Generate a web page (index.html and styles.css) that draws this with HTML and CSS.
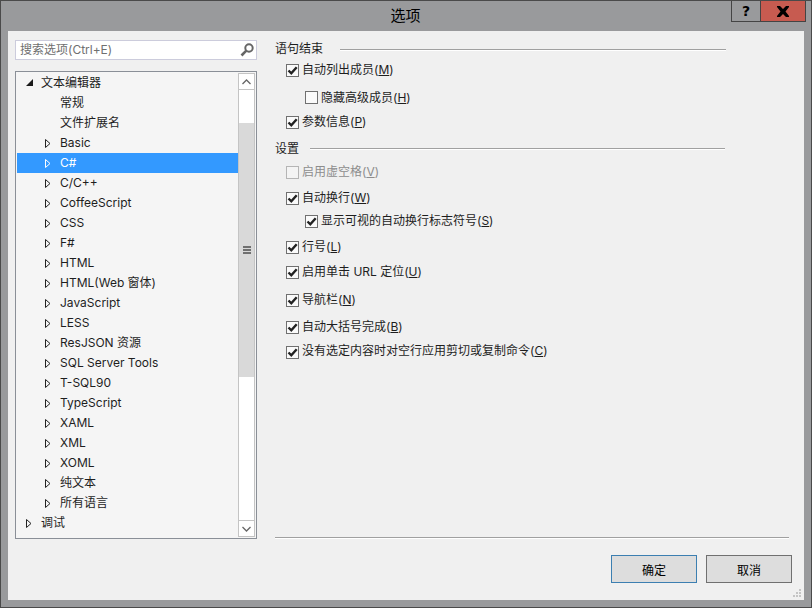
FILE: index.html
```html
<!DOCTYPE html>
<html lang="zh-CN">
<head>
<meta charset="utf-8">
<title>选项</title>
<link rel="stylesheet" href="styles.css">
</head>
<body>
<div class="window">
  <header class="titlebar">
    <div class="title">选项</div>
    <div class="controls">
      <div class="ctl help">?</div>
      <div class="ctl close"><svg width="14" height="11" viewBox="0 0 14 11"><path d="M1 0h3l3 3 3-3h3v1L9.500 5.500 13 10v1h-3L7 8l-3 3H1v-1l3.500-4.500L1 1z" fill="#000"/></svg></div>
    </div>
  </header>
  <main class="client">
    <div class="panes">
      <aside class="left">
        <div class="search"><span class="placeholder">搜索选项(Ctrl+E)</span>
          <svg class="mag" width="14" height="14" viewBox="0 0 14 14"><circle cx="9" cy="5" r="3.700" fill="none" stroke="#666" stroke-width="2"/><path d="M6.300 7.700 1.500 12.500" stroke="#666" stroke-width="2.600"/></svg>
        </div>
        <div class="tree">
          <div class="items">
            <div class="row l0"><svg class="arrow" width="7" height="7" viewBox="0 0 7 7"><path d="M7 0v7H0z" fill="#1a1a1a"/></svg><span>文本编辑器</span></div>
            <div class="row l1"><span>常规</span></div>
            <div class="row l1"><span>文件扩展名</span></div>
            <div class="row l1"><svg class="arrow" width="6" height="9" viewBox="0 0 6 9"><path d="M.5.500 5 4.500.5 8.500z" fill="none" stroke="#222"/></svg><span>Basic</span></div>
            <div class="row l1 selected"><svg class="arrow" width="6" height="9" viewBox="0 0 6 9"><path d="M.5.500 5 4.500.5 8.500z" fill="none" stroke="#fff"/></svg><span>C#</span></div>
            <div class="row l1"><svg class="arrow" width="6" height="9" viewBox="0 0 6 9"><path d="M.5.500 5 4.500.5 8.500z" fill="none" stroke="#222"/></svg><span>C/C++</span></div>
            <div class="row l1"><svg class="arrow" width="6" height="9" viewBox="0 0 6 9"><path d="M.5.500 5 4.500.5 8.500z" fill="none" stroke="#222"/></svg><span>CoffeeScript</span></div>
            <div class="row l1"><svg class="arrow" width="6" height="9" viewBox="0 0 6 9"><path d="M.5.500 5 4.500.5 8.500z" fill="none" stroke="#222"/></svg><span>CSS</span></div>
            <div class="row l1"><svg class="arrow" width="6" height="9" viewBox="0 0 6 9"><path d="M.5.500 5 4.500.5 8.500z" fill="none" stroke="#222"/></svg><span>F#</span></div>
            <div class="row l1"><svg class="arrow" width="6" height="9" viewBox="0 0 6 9"><path d="M.5.500 5 4.500.5 8.500z" fill="none" stroke="#222"/></svg><span>HTML</span></div>
            <div class="row l1"><svg class="arrow" width="6" height="9" viewBox="0 0 6 9"><path d="M.5.500 5 4.500.5 8.500z" fill="none" stroke="#222"/></svg><span>HTML(Web 窗体)</span></div>
            <div class="row l1"><svg class="arrow" width="6" height="9" viewBox="0 0 6 9"><path d="M.5.500 5 4.500.5 8.500z" fill="none" stroke="#222"/></svg><span>JavaScript</span></div>
            <div class="row l1"><svg class="arrow" width="6" height="9" viewBox="0 0 6 9"><path d="M.5.500 5 4.500.5 8.500z" fill="none" stroke="#222"/></svg><span>LESS</span></div>
            <div class="row l1"><svg class="arrow" width="6" height="9" viewBox="0 0 6 9"><path d="M.5.500 5 4.500.5 8.500z" fill="none" stroke="#222"/></svg><span>ResJSON 资源</span></div>
            <div class="row l1"><svg class="arrow" width="6" height="9" viewBox="0 0 6 9"><path d="M.5.500 5 4.500.5 8.500z" fill="none" stroke="#222"/></svg><span>SQL Server Tools</span></div>
            <div class="row l1"><svg class="arrow" width="6" height="9" viewBox="0 0 6 9"><path d="M.5.500 5 4.500.5 8.500z" fill="none" stroke="#222"/></svg><span>T-SQL90</span></div>
            <div class="row l1"><svg class="arrow" width="6" height="9" viewBox="0 0 6 9"><path d="M.5.500 5 4.500.5 8.500z" fill="none" stroke="#222"/></svg><span>TypeScript</span></div>
            <div class="row l1"><svg class="arrow" width="6" height="9" viewBox="0 0 6 9"><path d="M.5.500 5 4.500.5 8.500z" fill="none" stroke="#222"/></svg><span>XAML</span></div>
            <div class="row l1"><svg class="arrow" width="6" height="9" viewBox="0 0 6 9"><path d="M.5.500 5 4.500.5 8.500z" fill="none" stroke="#222"/></svg><span>XML</span></div>
            <div class="row l1"><svg class="arrow" width="6" height="9" viewBox="0 0 6 9"><path d="M.5.500 5 4.500.5 8.500z" fill="none" stroke="#222"/></svg><span>XOML</span></div>
            <div class="row l1"><svg class="arrow" width="6" height="9" viewBox="0 0 6 9"><path d="M.5.500 5 4.500.5 8.500z" fill="none" stroke="#222"/></svg><span>纯文本</span></div>
            <div class="row l1"><svg class="arrow" width="6" height="9" viewBox="0 0 6 9"><path d="M.5.500 5 4.500.5 8.500z" fill="none" stroke="#222"/></svg><span>所有语言</span></div>
            <div class="row l0"><svg class="arrow" width="6" height="9" viewBox="0 0 6 9"><path d="M.5.500 5 4.500.5 8.500z" fill="none" stroke="#222"/></svg><span>调试</span></div>
          </div>
          <div class="scrollbar">
            <div class="sbtn"><svg width="9" height="6" viewBox="0 0 9 6"><path d="M.5 5 4.500 1 8.500 5" fill="none" stroke="#666" stroke-width="1.300"/></svg></div>
            <div class="strack top"></div>
            <div class="thumb"><div class="grip"><i></i><i></i><i></i></div></div>
            <div class="strack bottom"></div>
            <div class="sbtn"><svg width="9" height="6" viewBox="0 0 9 6"><path d="M.5 1 4.500 5 8.500 1" fill="none" stroke="#666" stroke-width="1.300"/></svg></div>
          </div>
        </div>
      </aside>
      <section class="right">
        <div class="group g1"><span>语句结束</span><i></i></div>
        <label class="check c1"><b class="box"><svg class="tick" width="11" height="11" viewBox="0 0 11 11"><path d="M1.500 5.500 4.300 8.300 9.700 2.200" fill="none" stroke="#222" stroke-width="2.400"/></svg></b><span>自动列出成员(<u>M</u>)</span></label>
        <label class="check nested c2"><b class="box"></b><span>隐藏高级成员(<u>H</u>)</span></label>
        <label class="check c3"><b class="box"><svg class="tick" width="11" height="11" viewBox="0 0 11 11"><path d="M1.500 5.500 4.300 8.300 9.700 2.200" fill="none" stroke="#222" stroke-width="2.400"/></svg></b><span>参数信息(<u>P</u>)</span></label>
        <div class="group g2"><span>设置</span><i></i></div>
        <label class="check disabled c4"><b class="box"></b><span>启用虚空格(<u>V</u>)</span></label>
        <label class="check c5"><b class="box"><svg class="tick" width="11" height="11" viewBox="0 0 11 11"><path d="M1.500 5.500 4.300 8.300 9.700 2.200" fill="none" stroke="#222" stroke-width="2.400"/></svg></b><span>自动换行(<u>W</u>)</span></label>
        <label class="check nested c6"><b class="box"><svg class="tick" width="11" height="11" viewBox="0 0 11 11"><path d="M1.500 5.500 4.300 8.300 9.700 2.200" fill="none" stroke="#222" stroke-width="2.400"/></svg></b><span>显示可视的自动换行标志符号(<u>S</u>)</span></label>
        <label class="check c7"><b class="box"><svg class="tick" width="11" height="11" viewBox="0 0 11 11"><path d="M1.500 5.500 4.300 8.300 9.700 2.200" fill="none" stroke="#222" stroke-width="2.400"/></svg></b><span>行号(<u>L</u>)</span></label>
        <label class="check c8"><b class="box"><svg class="tick" width="11" height="11" viewBox="0 0 11 11"><path d="M1.500 5.500 4.300 8.300 9.700 2.200" fill="none" stroke="#222" stroke-width="2.400"/></svg></b><span>启用单击 URL 定位(<u>U</u>)</span></label>
        <label class="check c9"><b class="box"><svg class="tick" width="11" height="11" viewBox="0 0 11 11"><path d="M1.500 5.500 4.300 8.300 9.700 2.200" fill="none" stroke="#222" stroke-width="2.400"/></svg></b><span>导航栏(<u>N</u>)</span></label>
        <label class="check c10"><b class="box"><svg class="tick" width="11" height="11" viewBox="0 0 11 11"><path d="M1.500 5.500 4.300 8.300 9.700 2.200" fill="none" stroke="#222" stroke-width="2.400"/></svg></b><span>自动大括号完成(<u>B</u>)</span></label>
        <label class="check c11"><b class="box"><svg class="tick" width="11" height="11" viewBox="0 0 11 11"><path d="M1.500 5.500 4.300 8.300 9.700 2.200" fill="none" stroke="#222" stroke-width="2.400"/></svg></b><span>没有选定内容时对空行应用剪切或复制命令(<u>C</u>)</span></label>
      </section>
    </div>
    <div class="sep"></div>
    <footer class="buttons">
      <button class="btn default">确定</button>
      <button class="btn">取消</button>
    </footer>
    <svg class="resize" width="10" height="10" viewBox="0 0 10 10"><path d="M7 1h2v2H7zM7 4h2v2H7zM4 4h2v2H4zM7 7h2v2H7zM4 7h2v2H4zM1 7h2v2H1z" fill="#c4c4c4"/></svg>
  </main>
</div>
</body>
</html>
```
FILE: styles.css
```css
* { box-sizing: border-box; }
html, body { margin: 0; height: 100%; }
body {
  font-family: "Inter", "Noto Sans CJK SC", sans-serif;
  font-size: 12px;
  color: #1e1e1e;
  overflow: hidden;
}
.window {
  width: 812px;
  height: 608px;
  background: #999a9c;
  border: 1px solid #4a4a4a;
  display: flex;
  flex-direction: column;
  padding: 0 7px 7px;
}
.titlebar {
  height: 30px;
  flex: none;
  position: relative;
  display: flex;
  justify-content: flex-end;
  align-items: flex-start;
  margin-right: -2px;
}
.title {
  position: absolute;
  left: 0;
  right: 3px;
  top: 5px;
  text-align: center;
  font-size: 15px;
  line-height: 20px;
  color: #000;
}
.controls { display: flex; }
.ctl {
  height: 21px;
  border: 1px solid #444;
  border-top: 0;
  display: flex;
  align-items: center;
  justify-content: center;
}
.help {
  width: 29px;
  border-right: 0;
  font: bold 14px "DejaVu Sans", sans-serif;
  color: #000;
}
.close { width: 46px; background: #c75b50; }
.client {
  flex: 1;
  background: #f0f0f0;
  display: flex;
  flex-direction: column;
  padding: 9px 0 0 7px;
  min-height: 0;
  position: relative;
}
.panes { display: flex; height: 499px; flex: none; }
.left { width: 242px; flex: none; display: flex; flex-direction: column; }
.search {
  height: 20px;
  flex: none;
  background: #fff;
  border: 1px solid #ccccdc;
  display: flex;
  align-items: center;
  justify-content: space-between;
  padding: 0 2px 0 4px;
  color: #6f6f6f;
}
.placeholder { line-height: 18px; }
.tree {
  margin-top: 11px;
  height: 468px;
  flex: none;
  display: flex;
  background: #f5f5f5;
  border: 1px solid #8a8f97;
  padding: 1px;
  overflow: hidden;
}
.items { flex: 1; min-width: 0; }
.row { height: 20px; line-height: 20px; display: flex; align-items: center; position: relative; white-space: nowrap; }
.row span { display: block; }
.l0 { padding-left: 24px; }
.l1 { padding-left: 43px; }
.arrow { position: absolute; top: 6px; }
.l0 .arrow { left: 9px; }
.l1 .arrow { left: 28px; }
.selected { background: #3399ff; color: #fff; }
.scrollbar {
  width: 17px;
  flex: none;
  display: flex;
  flex-direction: column;
  border: 1px solid #c4c4c4;
  border-width: 0 1px;
  background: #fff;
}
.sbtn {
  height: 17px;
  flex: none;
  display: flex;
  align-items: center;
  justify-content: center;
  background: #fff;
  border: 1px solid #c4c4c4;
  border-width: 1px 0;
}
.strack { flex: none; }
.strack.top { height: 33px; }
.strack.bottom { flex: 1; }
.thumb {
  height: 254px;
  background: #d9d9d9;
  flex: none;
  display: flex;
  align-items: center;
  justify-content: center;
}
.grip { width: 8px; display: flex; flex-direction: column; gap: 1px; }
.grip i { display: block; height: 2px; background: #707070; }
.right {
  flex: 1;
  margin-left: 18px;
  display: flex;
  flex-direction: column;
  min-width: 0;
}
.group { display: flex; align-items: center; height: 18px; flex: none; }
.group span { line-height: 18px; }
.group i { flex: 1; height: 1px; background: #a0a0a0; box-shadow: 0 1px 0 #fff; }
.g1 { width: 451px; }
.g1 i { margin-left: 17px; }
.g2 { width: 450px; margin-top: 8px; }
.g2 i { margin-left: 11px; }
.g2 span { padding-top: 2px; }
.check { display: flex; align-items: center; height: 17px; padding-left: 11px; flex: none; white-space: nowrap; }
.check span { line-height: 16px; padding-bottom: 1px; }
.check.nested { padding-left: 30px; }
.box {
  width: 13px;
  height: 13px;
  flex: none;
  margin-right: 3px;
  background: #fafafa;
  border: 1px solid #707070;
  display: flex;
}
.disabled { color: #8d8d8d; }
.disabled .box { border-color: #b5b5b5; background: #f4f4f4; }
.c1 { margin-top: 4px; }
.c2 { margin-top: 10px; }
.c2 span { padding-top: 2px; }
.c3 { margin-top: 8px; }
.c4 { margin-top: 7px; }
.c5 { margin-top: 9px; }
.c6 { margin-top: 6px; }
.c7 { margin-top: 9px; }
.c8 { margin-top: 8px; }
.c9 { margin-top: 11px; }
.c10 { margin-top: 10px; }
.c11 { margin-top: 8px; }
.c11 span { padding-bottom: 3px; }
.sep { height: 1px; width: 514px; margin: -2px 0 0 260px; background: #a0a0a0; box-shadow: 0 1px 0 #fff; flex: none; }
.buttons { display: flex; justify-content: flex-end; gap: 9px; margin-top: 17px; padding-right: 12px; }
.btn {
  width: 86px;
  height: 28px;
  background: #dddddd;
  border: 1px solid #707070;
  font: inherit;
  color: #000;
  padding: 0;
}
.btn.default { border-color: #3c7fb1; }
.resize { position: absolute; right: 2px; bottom: 2px; }
```
